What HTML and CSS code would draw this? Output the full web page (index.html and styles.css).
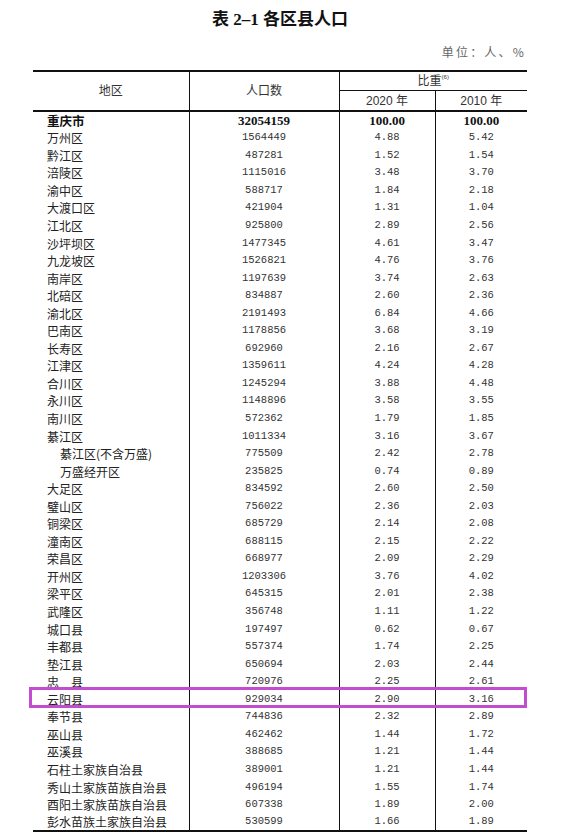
FILE: index.html
```html
<!DOCTYPE html>
<html lang="zh-CN">
<head>
<meta charset="utf-8">
<title>表 2-1 各区县人口</title>
<link rel="stylesheet" href="styles.css">
</head>
<body>
<div class="page">
  <h1 class="title">表 2–1 各区县人口</h1>
  <div class="unit">单位：人、%</div>
  <table class="tbl">
    <colgroup>
      <col class="w1"><col class="w2"><col class="w3"><col class="w4">
    </colgroup>
    <thead>
      <tr class="h1">
        <th rowspan="2" class="hd">地区</th>
        <th rowspan="2" class="hd vl">人口数</th>
        <th colspan="2" class="hd vl split">比重<sup class="note">(6)</sup></th>
      </tr>
      <tr class="h2">
        <th class="hd vl">2020 年</th>
        <th class="hd vl">2010 年</th>
      </tr>
    </thead>
    <tbody>
      <tr class="total"><td class="name">重庆市</td><td class="num vl">32054159</td><td class="num vl">100.00</td><td class="num vl">100.00</td></tr>
      <tr><td class="name">万州区</td><td class="num vl">1564449</td><td class="num vl">4.88</td><td class="num vl">5.42</td></tr>
      <tr><td class="name">黔江区</td><td class="num vl">487281</td><td class="num vl">1.52</td><td class="num vl">1.54</td></tr>
      <tr><td class="name">涪陵区</td><td class="num vl">1115016</td><td class="num vl">3.48</td><td class="num vl">3.70</td></tr>
      <tr><td class="name">渝中区</td><td class="num vl">588717</td><td class="num vl">1.84</td><td class="num vl">2.18</td></tr>
      <tr><td class="name">大渡口区</td><td class="num vl">421904</td><td class="num vl">1.31</td><td class="num vl">1.04</td></tr>
      <tr><td class="name">江北区</td><td class="num vl">925800</td><td class="num vl">2.89</td><td class="num vl">2.56</td></tr>
      <tr><td class="name">沙坪坝区</td><td class="num vl">1477345</td><td class="num vl">4.61</td><td class="num vl">3.47</td></tr>
      <tr><td class="name">九龙坡区</td><td class="num vl">1526821</td><td class="num vl">4.76</td><td class="num vl">3.76</td></tr>
      <tr><td class="name">南岸区</td><td class="num vl">1197639</td><td class="num vl">3.74</td><td class="num vl">2.63</td></tr>
      <tr><td class="name">北碚区</td><td class="num vl">834887</td><td class="num vl">2.60</td><td class="num vl">2.36</td></tr>
      <tr><td class="name">渝北区</td><td class="num vl">2191493</td><td class="num vl">6.84</td><td class="num vl">4.66</td></tr>
      <tr><td class="name">巴南区</td><td class="num vl">1178856</td><td class="num vl">3.68</td><td class="num vl">3.19</td></tr>
      <tr><td class="name">长寿区</td><td class="num vl">692960</td><td class="num vl">2.16</td><td class="num vl">2.67</td></tr>
      <tr><td class="name">江津区</td><td class="num vl">1359611</td><td class="num vl">4.24</td><td class="num vl">4.28</td></tr>
      <tr><td class="name">合川区</td><td class="num vl">1245294</td><td class="num vl">3.88</td><td class="num vl">4.48</td></tr>
      <tr><td class="name">永川区</td><td class="num vl">1148896</td><td class="num vl">3.58</td><td class="num vl">3.55</td></tr>
      <tr><td class="name">南川区</td><td class="num vl">572362</td><td class="num vl">1.79</td><td class="num vl">1.85</td></tr>
      <tr><td class="name">綦江区</td><td class="num vl">1011334</td><td class="num vl">3.16</td><td class="num vl">3.67</td></tr>
      <tr><td class="name sub">綦江区(不含万盛)</td><td class="num vl">775509</td><td class="num vl">2.42</td><td class="num vl">2.78</td></tr>
      <tr><td class="name sub">万盛经开区</td><td class="num vl">235825</td><td class="num vl">0.74</td><td class="num vl">0.89</td></tr>
      <tr><td class="name">大足区</td><td class="num vl">834592</td><td class="num vl">2.60</td><td class="num vl">2.50</td></tr>
      <tr><td class="name">璧山区</td><td class="num vl">756022</td><td class="num vl">2.36</td><td class="num vl">2.03</td></tr>
      <tr><td class="name">铜梁区</td><td class="num vl">685729</td><td class="num vl">2.14</td><td class="num vl">2.08</td></tr>
      <tr><td class="name">潼南区</td><td class="num vl">688115</td><td class="num vl">2.15</td><td class="num vl">2.22</td></tr>
      <tr><td class="name">荣昌区</td><td class="num vl">668977</td><td class="num vl">2.09</td><td class="num vl">2.29</td></tr>
      <tr><td class="name">开州区</td><td class="num vl">1203306</td><td class="num vl">3.76</td><td class="num vl">4.02</td></tr>
      <tr><td class="name">梁平区</td><td class="num vl">645315</td><td class="num vl">2.01</td><td class="num vl">2.38</td></tr>
      <tr><td class="name">武隆区</td><td class="num vl">356748</td><td class="num vl">1.11</td><td class="num vl">1.22</td></tr>
      <tr><td class="name">城口县</td><td class="num vl">197497</td><td class="num vl">0.62</td><td class="num vl">0.67</td></tr>
      <tr><td class="name">丰都县</td><td class="num vl">557374</td><td class="num vl">1.74</td><td class="num vl">2.25</td></tr>
      <tr><td class="name">垫江县</td><td class="num vl">650694</td><td class="num vl">2.03</td><td class="num vl">2.44</td></tr>
      <tr><td class="name">忠　县</td><td class="num vl">720976</td><td class="num vl">2.25</td><td class="num vl">2.61</td></tr>
      <tr><td class="name">云阳县</td><td class="num vl">929034</td><td class="num vl">2.90</td><td class="num vl">3.16</td></tr>
      <tr><td class="name">奉节县</td><td class="num vl">744836</td><td class="num vl">2.32</td><td class="num vl">2.89</td></tr>
      <tr><td class="name">巫山县</td><td class="num vl">462462</td><td class="num vl">1.44</td><td class="num vl">1.72</td></tr>
      <tr><td class="name">巫溪县</td><td class="num vl">388685</td><td class="num vl">1.21</td><td class="num vl">1.44</td></tr>
      <tr><td class="name">石柱土家族自治县</td><td class="num vl">389001</td><td class="num vl">1.21</td><td class="num vl">1.44</td></tr>
      <tr><td class="name">秀山土家族苗族自治县</td><td class="num vl">496194</td><td class="num vl">1.55</td><td class="num vl">1.74</td></tr>
      <tr><td class="name">酉阳土家族苗族自治县</td><td class="num vl">607338</td><td class="num vl">1.89</td><td class="num vl">2.00</td></tr>
      <tr class="last"><td class="name">彭水苗族土家族自治县</td><td class="num vl">530599</td><td class="num vl">1.66</td><td class="num vl">1.89</td></tr>
    </tbody>
  </table>
  <div class="mark" aria-hidden="true"></div>
</div>
</body>
</html>
```

FILE: styles.css
```css
html, body {
  margin: 0;
  padding: 0;
  background: #ffffff;
}

body {
  font-family: "Noto Sans CJK SC", sans-serif;
  color: #222;
}

.page {
  position: relative;
  width: 494px;
  margin-left: 33px;
}

.title {
  margin: 0;
  padding-top: 8px;
  height: 24px;
  line-height: 24px;
  text-align: center;
  font-family: "Liberation Serif", "Noto Sans CJK SC", serif;
  font-size: 17px;
  font-weight: 700;
  color: #111;
}

.unit {
  margin-top: 11px;
  height: 18px;
  line-height: 18px;
  text-align: right;
  padding-right: 1px;
  font-size: 12px;
  letter-spacing: 2.2px;
  color: #666;
}

.tbl {
  margin-top: 9px;
  width: 494px;
  border-collapse: collapse;
  table-layout: fixed;
}

.w1 { width: 156px; }
.w2 { width: 150px; }
.w3 { width: 96px; }
.w4 { width: 92px; }

.tbl th,
.tbl td {
  padding: 0;
  white-space: nowrap;
  overflow: visible;
}

.vl {
  border-left: 1px solid #111;
}

.h1 th {
  border-top: 2px solid #111;
  height: 18px;
}

.h2 th {
  height: 19px;
}

.h1 th[rowspan],
.h2 th {
  border-bottom: 2px solid #111;
}

.split {
  border-bottom: 1px solid #111;
}

.hd {
  font-family: "Liberation Sans", "Noto Sans CJK SC", sans-serif;
  font-size: 12px;
  font-weight: 400;
  color: #333;
  text-align: center;
  vertical-align: middle;
  line-height: 16px;
}

.note {
  font-size: 6px;
  vertical-align: 6px;
  line-height: 0;
}

.tbl tbody tr {
  height: 17.56px;
}

.tbl tbody td {
  line-height: 17px;
  vertical-align: middle;
}

.name {
  padding-left: 14px !important;
  font-size: 12px;
  color: #222;
  text-align: left;
}

.name.sub {
  padding-left: 27px !important;
}

.num {
  font-family: "Liberation Mono", monospace;
  font-size: 10.5px;
  color: #333;
  text-align: center;
}

.total .name {
  font-weight: 700;
  font-size: 12.5px;
  color: #111;
}

.total .num {
  font-family: "Liberation Serif", serif;
  font-weight: 700;
  font-size: 13px;
  color: #111;
}

.last td {
  border-bottom: 2px solid #111;
}

.mark {
  position: absolute;
  left: -4px;
  top: 687px;
  width: 498px;
  height: 21px;
  box-sizing: border-box;
  border: 3px solid #c34cd0;
  pointer-events: none;
}
```
